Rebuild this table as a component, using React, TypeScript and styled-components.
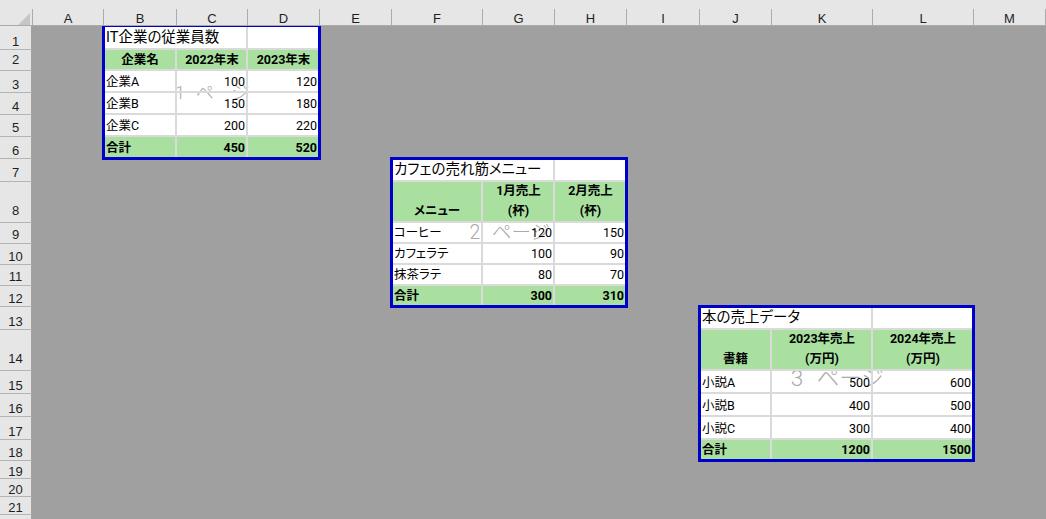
import React from 'react';
import styled, { createGlobalStyle } from 'styled-components';

const GlobalStyle = createGlobalStyle`
  html, body { margin: 0; padding: 0; background: #a0a0a0; overflow: hidden; }
  body { font-family: Roboto, "Noto Sans CJK JP", "Noto Sans", sans-serif; }
`;

const COLS = ['A', 'B', 'C', 'D', 'E', 'F', 'G', 'H', 'I', 'J', 'K', 'L', 'M'];
const COL_W = [71, 73, 71, 72, 72, 91, 72, 72, 73, 72, 101, 101, 72];
const ROWS = [
  { h: 24, pb: 2.5 }, { h: 21, pb: 5.5 }, { h: 22, pb: 2.5 }, { h: 22, pb: 2.5 },
  { h: 22, pb: 3 }, { h: 22, pb: 2.5 }, { h: 23, pb: 3.5 }, { h: 41, pb: 6 },
  { h: 21, pb: 3 }, { h: 21, pb: 2.5 }, { h: 21, pb: 3 }, { h: 21, pb: 2 },
  { h: 23, pb: 2.5 }, { h: 41, pb: 6.5 }, { h: 23, pb: 2.5 }, { h: 23, pb: 2 },
  { h: 23, pb: 2.5 }, { h: 21, pb: 2 }, { h: 18, pb: 1 }, { h: 18, pb: 1 },
  { h: 18, pb: 1 },
];

const px = (a: number[]) => a.map((v) => `${v}px`).join(' ');

const Sheet = styled.div<{ $cols: string; $rows: string }>`
  display: grid;
  grid-template-columns: ${(p) => p.$cols};
  grid-template-rows: ${(p) => p.$rows};
  width: 1046px;
  height: 519px;
  overflow: hidden;
  background: #a0a0a0;
`;

const Corner = styled.div`
  grid-row: 1;
  grid-column: 1;
  background: #e6e6e6;
  border-bottom: 1px solid #ababab;
  padding-top: 9px;
  display: flex;
  position: relative;
  z-index: 3;
`;

const CornerInner = styled.div`
  flex: 1;
  border-right: 1px solid #ababab;
  display: flex;
  align-items: flex-end;
  justify-content: flex-end;
  padding-right: 2px;
`;

const ColHead = styled.div<{ $col: number }>`
  grid-row: 1;
  grid-column: ${(p) => p.$col};
  background: #e6e6e6;
  border-bottom: 1px solid #ababab;
  padding-top: 9px;
  display: flex;
  position: relative;
  z-index: 3;
`;

const ColLabel = styled.div`
  flex: 1;
  border-right: 1px solid #ababab;
  display: flex;
  align-items: flex-end;
  justify-content: center;
  padding-bottom: 1px;
  font: 13px/10px "Liberation Sans", Arial, sans-serif;
  color: #1e1e1e;
`;

const RowHead = styled.div<{ $row: number; $pb: number }>`
  grid-column: 1;
  grid-row: ${(p) => p.$row};
  background: #e6e6e6;
  border-bottom: 1px solid #b4b4b4;
  border-right: 2px solid #a0a0a0;
  display: flex;
  align-items: flex-end;
  justify-content: center;
  padding-bottom: ${(p) => p.$pb}px;
  font: 13px/10px "Liberation Sans", Arial, sans-serif;
  color: #1e1e1e;
`;

const PrintArea = styled.div<{ $area: string; $cols: string; $rows: string }>`
  grid-area: ${(p) => p.$area};
  position: relative;
  z-index: 1;
  isolation: isolate;
  background: #ffffff;
  display: grid;
  grid-template-columns: ${(p) => p.$cols};
  grid-template-rows: ${(p) => p.$rows};
  &::after {
    content: '';
    position: absolute;
    top: -2px;
    left: -2px;
    right: -1px;
    bottom: -1px;
    border: 3px solid #0000cc;
    z-index: 2;
    pointer-events: none;
  }
`;

type Align = 'left' | 'right' | 'center';

const alignMap: Record<Align, string> = { left: 'flex-start', right: 'flex-end', center: 'center' };

const Cell = styled.div<{ $fill?: boolean; $align?: Align; $bold?: boolean; $span?: number; $kind?: 'body' | 'title' | 'tall' }>`
  position: relative;
  z-index: 1;
  grid-column: span ${(p) => p.$span ?? 1};
  background: ${(p) => (p.$fill ? '#a9e0a0' : 'transparent')};
  border-right: 2px solid #dadada;
  border-bottom: 2px solid #dadada;
  display: flex;
  flex-direction: column;
  justify-content: flex-end;
  align-items: ${(p) => alignMap[p.$align ?? 'left']};
  text-align: ${(p) => p.$align ?? 'left'};
  padding: 0 1px ${(p) => (p.$kind === 'title' ? 1 : p.$kind === 'tall' ? 0 : 1)}px 2px;
  font-family: Roboto, "Noto Sans CJK JP", sans-serif;
  font-size: ${(p) => (p.$kind === 'title' ? 14.5 : 12.5)}px;
  line-height: ${(p) => (p.$kind === 'title' ? 18 : p.$kind === 'tall' ? 20 : 16)}px;
  font-weight: ${(p) => (p.$bold ? 700 : 400)};
  font-feature-settings: "palt";
  white-space: nowrap;
  color: #000;
`;

const PageMark = styled.div<{ $size: number; $dy: number }>`
  position: absolute;
  left: 50%;
  top: 50%;
  transform: translate(-50%, calc(-50% + ${(p) => p.$dy}px));
  z-index: 0;
  font-family: Roboto, "Noto Sans CJK JP", sans-serif;
  font-size: ${(p) => p.$size}px;
  line-height: 1;
  font-weight: 300;
  color: #a9a9a9;
  white-space: nowrap;
  word-spacing: 0.35em;
  font-feature-settings: "palt";
`;

type TableData = {
  area: string;
  colIdx: number;
  rowIdx: number;
  title: string;
  head: string[][];
  tallHead: boolean;
  body: [string, string, string][];
  total: [string, string];
  mark: string;
  markSize: number;
  markDy: number;
};

const TABLES: TableData[] = [
  {
    area: '2 / 3 / 8 / 6',
    colIdx: 1,
    rowIdx: 0,
    title: 'IT企業の従業員数',
    head: [['企業名'], ['2022年末'], ['2023年末']],
    tallHead: false,
    body: [
      ['企業A', '100', '120'],
      ['企業B', '150', '180'],
      ['企業C', '200', '220'],
    ],
    total: ['450', '520'],
    mark: '1 ページ',
    markSize: 18,
    markDy: 0,
  },
  {
    area: '8 / 7 / 14 / 10',
    colIdx: 5,
    rowIdx: 6,
    title: 'カフェの売れ筋メニュー',
    head: [['メニュー'], ['1月売上', '(杯)'], ['2月売上', '(杯)']],
    tallHead: true,
    body: [
      ['コーヒー', '120', '150'],
      ['カフェラテ', '100', '90'],
      ['抹茶ラテ', '80', '70'],
    ],
    total: ['300', '310'],
    mark: '2 ページ',
    markSize: 19.5,
    markDy: 0,
  },
  {
    area: '14 / 11 / 20 / 14',
    colIdx: 9,
    rowIdx: 12,
    title: '本の売上データ',
    head: [['書籍'], ['2023年売上', '(万円)'], ['2024年売上', '(万円)']],
    tallHead: true,
    body: [
      ['小説A', '500', '600'],
      ['小説B', '400', '500'],
      ['小説C', '300', '400'],
    ],
    total: ['1200', '1500'],
    mark: '3 ページ',
    markSize: 22.5,
    markDy: -6,
  },
];

const DataTable: React.FC<{ t: TableData }> = ({ t }) => {
  const cols = px(COL_W.slice(t.colIdx, t.colIdx + 3));
  const rows = px(ROWS.slice(t.rowIdx, t.rowIdx + 6).map((r) => r.h));
  return (
    <PrintArea $area={t.area} $cols={cols} $rows={rows}>
      <PageMark $size={t.markSize} $dy={t.markDy}>{t.mark}</PageMark>
      <Cell $span={2} $kind="title">{t.title}</Cell>
      <Cell />
      {t.head.map((lines, i) => (
        <Cell key={`h${i}`} $fill $bold $align="center" $kind={t.tallHead ? 'tall' : 'body'}>
          {lines.map((l, j) => (
            <span key={j}>{l}</span>
          ))}
        </Cell>
      ))}
      {t.body.map((r, i) => (
        <React.Fragment key={`r${i}`}>
          <Cell>{r[0]}</Cell>
          <Cell $align="right">{r[1]}</Cell>
          <Cell $align="right">{r[2]}</Cell>
        </React.Fragment>
      ))}
      <Cell $fill $bold>合計</Cell>
      <Cell $fill $bold $align="right">{t.total[0]}</Cell>
      <Cell $fill $bold $align="right">{t.total[1]}</Cell>
    </PrintArea>
  );
};

const RowFill = styled.div`
  grid-column: 1;
  grid-row: ${ROWS.length + 2};
  background: #e6e6e6;
  border-right: 2px solid #a0a0a0;
`;

export default function App() {
  const cols = `33px ${px(COL_W)}`;
  const rows = `26px ${px(ROWS.map((r) => r.h))} 1fr`;
  return (
    <>
      <GlobalStyle />
      <Sheet $cols={cols} $rows={rows}>
        <Corner>
          <CornerInner>
            <svg width="12" height="12" viewBox="0 0 12 12">
              <polygon points="12,0 12,12 0,12" fill="#c6c6c6" />
            </svg>
          </CornerInner>
        </Corner>
        {COLS.map((c, i) => (
          <ColHead key={c} $col={i + 2}>
            <ColLabel>{c}</ColLabel>
          </ColHead>
        ))}
        {ROWS.map((r, i) => (
          <RowHead key={i} $row={i + 2} $pb={r.pb}>
            {i + 1}
          </RowHead>
        ))}
        <RowFill />
        {TABLES.map((t, i) => (
          <DataTable key={i} t={t} />
        ))}
      </Sheet>
    </>
  );
}
